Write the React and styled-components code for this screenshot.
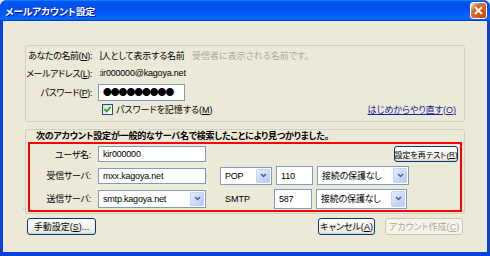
import React from "react";
import styled, { createGlobalStyle } from "styled-components";

const GlobalStyle = createGlobalStyle`
  html, body {
    margin: 0;
    padding: 0;
    width: 490px;
    height: 256px;
    overflow: hidden;
    background: #ece9d8;
  }
  body {
    font-family: "Liberation Sans", "Noto Sans CJK JP", sans-serif;
    font-size: 9px;
    font-feature-settings: "palt";
    color: #000;
  }
`;

const Frame = styled.div`
  width: 490px;
  height: 256px;
  box-sizing: border-box;
  display: flex;
  flex-direction: column;
  background: #0842d8;
  border-radius: 7px 7px 0 0;
  overflow: hidden;
`;

const TitleBar = styled.div`
  flex: 0 0 21px;
  display: flex;
  align-items: center;
  justify-content: space-between;
  padding: 0 3px 0 5px;
  background: linear-gradient(
    180deg,
    #0997ff,
    #0053ee 8%,
    #0050ee 40%,
    #0066ff 88%,
    #0066ff 93%,
    #005bff 95%,
    #003dd7 96%,
    #003dd7
  );
`;

const Title = styled.span`
  color: #fff;
  font-family: "Noto Sans CJK JP", sans-serif;
  font-weight: bold;
  font-size: 9.6px;
  text-shadow: 1px 1px #0f1089;
`;

const CloseButton = styled.div`
  width: 15px;
  height: 15px;
  display: flex;
  align-items: center;
  justify-content: center;
  border: 1px solid #fff;
  border-radius: 3px;
  background: radial-gradient(
    circle at 90% 90%,
    #cc4600 0%,
    #dc6527 55%,
    #cd7546 70%,
    #ffccb2 90%,
    #fff 100%
  );
`;

const Body = styled.div`
  flex: 1;
  margin: 0 3px 4px;
  background: #ece9d8;
  padding: 24px 22px 0 22px;
  display: flex;
  flex-direction: column;
`;

const GroupBox = styled.div`
  height: ${(p) => p.h}px;
  box-sizing: border-box;
  border: 1px solid #d0d0bf;
  border-radius: 3px;
  display: flex;
  flex-direction: column;
  padding: ${(p) => p.pad};
  margin-top: ${(p) => p.mt || 0}px;
`;

const Row = styled.div`
  height: ${(p) => p.h}px;
  display: flex;
  align-items: center;
`;

const Label = styled.span`
  width: 66px;
  text-align: right;
  white-space: nowrap;
  letter-spacing: -0.4px;
  flex: none;
`;

const U = styled.span`
  text-decoration: underline;
`;

const ClipField = styled.span`
  display: inline-block;
  width: ${(p) => p.w}px;
  margin-left: 8px;
  overflow: hidden;
  white-space: nowrap;
  flex: none;
`;

const Scrolled = styled.span`
  display: inline-block;
  margin-left: ${(p) => p.shift}px;
  letter-spacing: -0.2px;
`;

const Hint = styled.span`
  color: #aca899;
  white-space: nowrap;
`;

const TextBox = styled.div`
  width: ${(p) => p.w}px;
  height: ${(p) => p.h}px;
  box-sizing: border-box;
  border: 1px solid #7f9db9;
  background: #fff;
  display: flex;
  align-items: center;
  padding-left: 4px;
  margin-left: ${(p) => p.ml || 0}px;
  white-space: nowrap;
  overflow: hidden;
  letter-spacing: -0.2px;
`;

const Dots = styled.span`
  font-family: "Noto Sans CJK JP", sans-serif;
  font-size: 8.8px;
  letter-spacing: -1px;
  line-height: 1;
`;

const CheckBox = styled.div`
  width: 11px;
  height: 11px;
  box-sizing: border-box;
  border: 1px solid #1c5180;
  background: linear-gradient(135deg, #dcdcd7, #fff);
  margin: 0 3px 0 10px;
  display: flex;
  align-items: center;
  justify-content: center;
`;

const Link = styled.a`
  margin-left: auto;
  color: #1c1c9c;
  text-decoration: underline;
  white-space: nowrap;
`;

const Heading = styled.div`
  height: 12px;
  line-height: 12px;
  padding-left: 8px;
  font-weight: bold;
  letter-spacing: -0.22px;
  white-space: nowrap;
`;

const RedBox = styled.div`
  flex: 1;
  border: 2px solid #ff0000;
  display: grid;
  grid-template-columns: 68px 122px 56px 41px 1fr;
  grid-template-rows: 16px 19px 19px;
  row-gap: 4px;
  padding: 2px 0 1px;
  align-items: center;
`;

const GridLabel = styled.span`
  text-align: right;
  padding-right: 7px;
  letter-spacing: -0.3px;
  white-space: nowrap;
`;

const Protocol = styled.span`
  padding-left: 5px;
`;

const Select = styled.div`
  width: ${(p) => p.w}px;
  height: ${(p) => p.h}px;
  box-sizing: border-box;
  border: 1px solid #7f9db9;
  background: #fff;
  display: flex;
  align-items: center;
  padding: 1px 1px 1px 4px;
  margin-left: ${(p) => p.ml || 0}px;
  white-space: nowrap;
  letter-spacing: -0.2px;
`;

const SelectText = styled.span`
  flex: 1;
  overflow: hidden;
`;

const DropButton = styled.div`
  width: 14px;
  align-self: stretch;
  box-sizing: border-box;
  border: 1px solid #c3d3fd;
  border-radius: 1px;
  background: linear-gradient(135deg, #e6eefc, #b7c9f6);
  display: flex;
  align-items: center;
  justify-content: center;
`;

const Button = styled.div`
  width: ${(p) => p.w}px;
  height: ${(p) => p.h || 17}px;
  box-sizing: border-box;
  border: 1px solid ${(p) => (p.disabled ? "#c9c7ba" : "#003c74")};
  border-radius: 3px;
  background: ${(p) =>
    p.disabled
      ? "#f5f4ea"
      : "linear-gradient(180deg, #fff 0%, #ecebe6 86%, #d6d0c5 100%)"};
  color: ${(p) => (p.disabled ? "#aca899" : "#000")};
  display: flex;
  align-items: center;
  justify-content: center;
  white-space: nowrap;
  font-size: ${(p) => p.fs || 9}px;
`;

const RetestButton = styled(Button)`
  grid-column: 3 / -1;
  justify-self: end;
  margin-right: 2px;
`;

const ButtonRow = styled.div`
  display: flex;
  align-items: center;
  margin-top: 4px;
  padding: 0 2px;
  gap: 10px;
`;

const Spacer = styled.div`
  flex: 1;
`;

const Chevron = () => (
  <svg width="7" height="5" viewBox="0 0 7 5">
    <path d="M1 1 L3.5 3.5 L6 1" fill="none" stroke="#4d6185" strokeWidth="1.5" />
  </svg>
);

const Combo = ({ w, h, ml, children }) => (
  <Select w={w} h={h} ml={ml}>
    <SelectText>{children}</SelectText>
    <DropButton>
      <Chevron />
    </DropButton>
  </Select>
);

export default function App() {
  return (
    <>
      <GlobalStyle />
      <Frame>
        <TitleBar>
          <Title>メールアカウント設定</Title>
          <CloseButton>
            <svg width="9" height="9" viewBox="0 0 9 9">
              <path d="M1 1 L8 8 M8 1 L1 8" stroke="#fff" strokeWidth="1.8" />
            </svg>
          </CloseButton>
        </TitleBar>
        <Body>
          <GroupBox h={77} pad="1px 8px 0 0">
            <Row h={17}>
              <Label>
                あなたの名前(<U>N</U>):
              </Label>
              <ClipField w={92}>
                <Scrolled shift={-7}>個人として表示する名前</Scrolled>
              </ClipField>
              <Hint>受信者に表示される名前です。</Hint>
            </Row>
            <Row h={18}>
              <Label>
                メールアドレス(<U>L</U>):
              </Label>
              <ClipField w={92}>
                <Scrolled shift={-3}>kir000000@kagoya.net</Scrolled>
              </ClipField>
            </Row>
            <Row h={20}>
              <Label>
                パスワード(<U>P</U>):
              </Label>
              <TextBox w={87} h={17} ml={6}>
                <Dots>●●●●●●●●●</Dots>
              </TextBox>
            </Row>
            <Row h={14}>
              <Label />
              <CheckBox>
                <svg width="9" height="9" viewBox="0 0 9 9">
                  <path d="M1.5 4.2 L3.6 6.4 L7.6 2" fill="none" stroke="#21a121" strokeWidth="1.8" />
                </svg>
              </CheckBox>
              <span>
                パスワードを記憶する(<U>M</U>)
              </span>
              <Link>はじめからやり直す(O)</Link>
            </Row>
          </GroupBox>

          <GroupBox h={85} mt={7} pad="0 2px 1px 2px">
            <Heading>次のアカウント設定が一般的なサーバ名で検索したことにより見つかりました。</Heading>
            <RedBox>
              <GridLabel>ユーザ名:</GridLabel>
              <TextBox w={108} h={16}>kir000000</TextBox>
              <RetestButton w={64} h={16} fs={8}>
                設定を再テスト(<U>R</U>)
              </RetestButton>

              <GridLabel>受信サーバ:</GridLabel>
              <TextBox w={108} h={16}>mxx.kagoya.net</TextBox>
              <Combo w={52} h={18}>POP</Combo>
              <TextBox w={37} h={19}>110</TextBox>
              <Combo w={92} h={19}>接続の保護なし</Combo>

              <GridLabel>送信サーバ:</GridLabel>
              <Combo w={108} h={18}>smtp.kagoya.net</Combo>
              <Protocol>SMTP</Protocol>
              <TextBox w={38} h={20} ml={-2}>587</TextBox>
              <Combo w={91} h={20} ml={-1}>接続の保護なし</Combo>
            </RedBox>
          </GroupBox>

          <ButtonRow>
            <Button w={69}>
              手動設定(<U>S</U>)...
            </Button>
            <Spacer />
            <Button w={57}>
              キャンセル(<U>A</U>)
            </Button>
            <Button w={78} disabled>
              アカウント作成(<U>C</U>)
            </Button>
          </ButtonRow>
        </Body>
      </Frame>
    </>
  );
}
